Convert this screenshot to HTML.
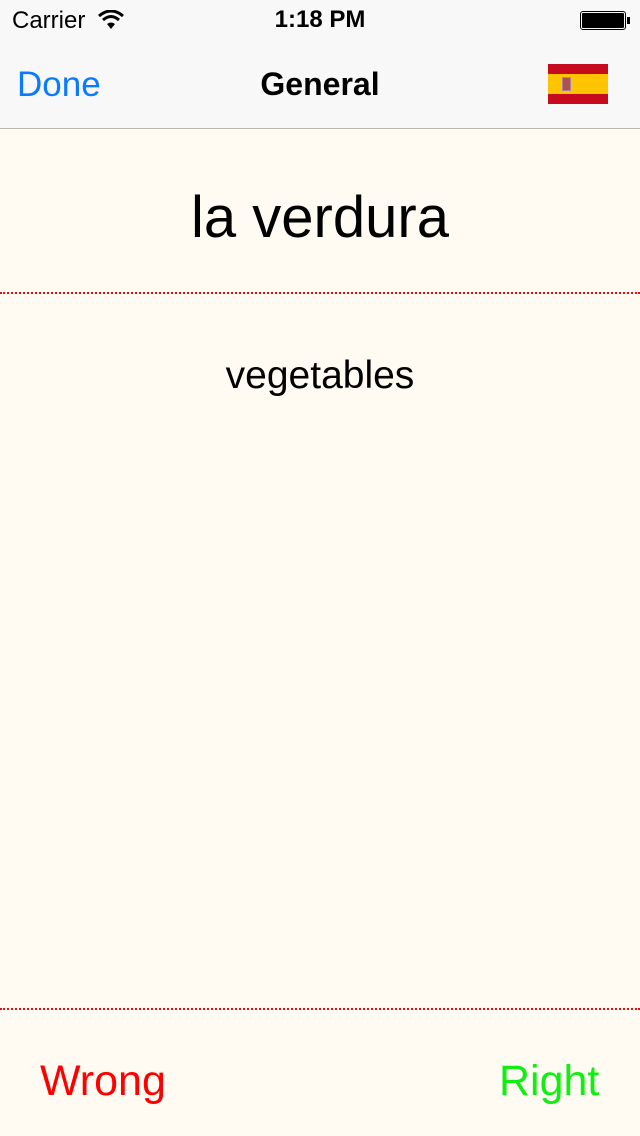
<!DOCTYPE html>
<html><head><meta charset="utf-8"><style>
*{margin:0;padding:0;box-sizing:border-box}
body{width:640px;height:1136px;background:#fffaf2;font-family:"Liberation Sans",sans-serif;position:relative;overflow:hidden}
.nav{position:absolute;top:0;left:0;width:640px;height:129px;background:#f8f8f8;border-bottom:1px solid #b8b4ae}
.t{position:absolute;white-space:nowrap;line-height:1}
.dot{position:absolute;left:0;width:640px;height:0;border-top:2px dotted #e01010}
</style></head><body>
<div class="nav">
<div class="t" style="left:12px;top:9px;font-size:24px">Carrier</div>
<svg style="position:absolute;left:98px;top:10px" width="26" height="20" viewBox="0 0 26 20"><path d="M13 19 L9 14 Q13 11 17 14Z" fill="#000"/><path d="M5 10 Q13 3 21 10" stroke="#000" stroke-width="3" fill="none"/><path d="M1 6 Q13 -4 25 6" stroke="#000" stroke-width="3" fill="none"/></svg>
<div class="t" style="left:0;width:640px;text-align:center;top:8px;font-size:24px;font-weight:bold">1:18 PM</div>
<div style="position:absolute;left:580px;top:11px;width:46px;height:19px;border:1.5px solid #000;border-radius:3px;padding:1px"><div style="background:#000;width:100%;height:100%;border-radius:1px"></div></div>
<div style="position:absolute;left:627px;top:17px;width:3px;height:7px;background:#000"></div>
<div class="t" style="left:17px;top:67px;font-size:35px;color:#0a7aff">Done</div>
<div class="t" style="left:0;width:640px;text-align:center;top:68px;font-size:32px;font-weight:bold">General</div>
<div style="position:absolute;left:548px;top:64px;width:60px;height:40px;background:linear-gradient(#c60b1e 0 25%,#ffc400 25% 75%,#c60b1e 75%)"></div>
<div style="position:absolute;left:562px;top:77px;width:9px;height:14px;background:#b05050;border:1px solid #a89"></div>
</div>
<div class="t" style="left:0;width:640px;text-align:center;top:189px;font-size:58px">la verdura</div>
<div class="dot" style="top:292px"></div>
<div class="t" style="left:0;width:640px;text-align:center;top:356px;font-size:39px">vegetables</div>
<div class="dot" style="top:1008px"></div>
<div class="t" style="left:40px;top:1060px;font-size:43px;color:#ff0000">Wrong</div>
<div class="t" style="left:499px;top:1060px;font-size:43px;color:#11ee11">Right</div>
</body></html>
